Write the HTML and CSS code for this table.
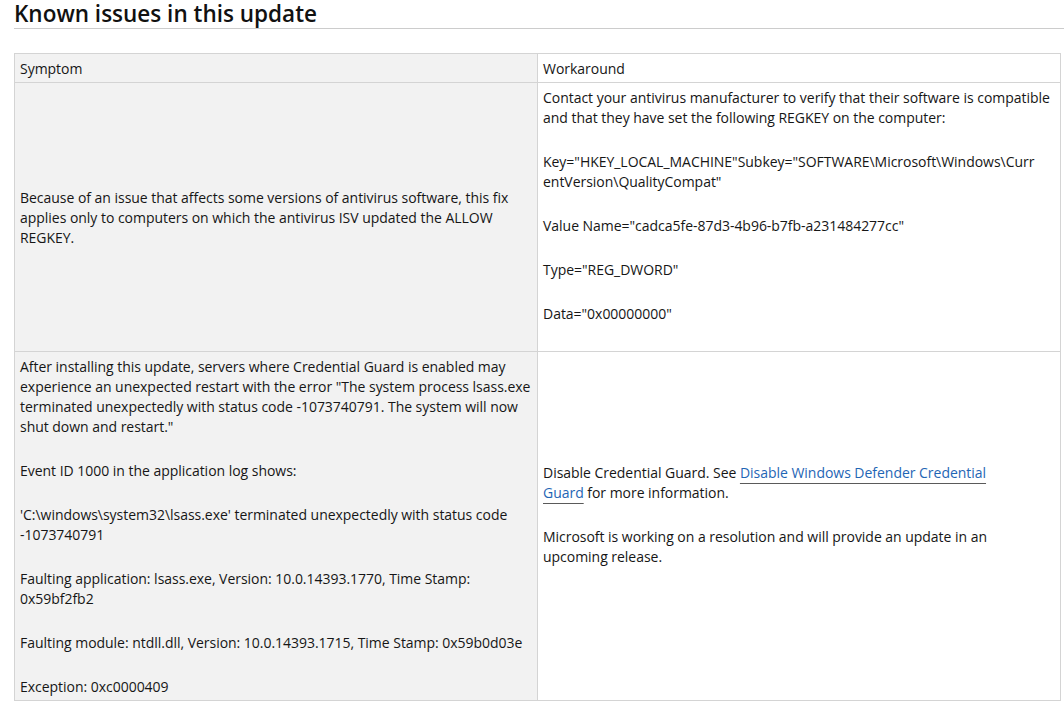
FILE: index.html
```html
<!DOCTYPE html>
<html lang="en">
<head>
<meta charset="utf-8">
<title>Known issues in this update</title>
<link rel="stylesheet" href="styles.css">
</head>
<body>
<main class="page">
  <h2 class="title">Known issues in this update</h2>
  <table class="issues">
    <colgroup>
      <col class="col-symptom">
      <col class="col-workaround">
    </colgroup>
    <thead>
      <tr>
        <th class="cell symptom">Symptom</th>
        <th class="cell workaround">Workaround</th>
      </tr>
    </thead>
    <tbody>
      <tr>
        <td class="cell symptom">
          <p>Because of an issue that affects some versions of antivirus software, this fix applies only to computers on which the antivirus ISV updated the ALLOW REGKEY.</p>
        </td>
        <td class="cell workaround keep-last">
          <p>Contact your antivirus manufacturer to verify that their software is compatible and that they have set the following REGKEY on the computer:</p>
          <p class="reg">Key="HKEY_LOCAL_MACHINE"Subkey="SOFTWARE\Microsoft\Windows\Curr<wbr>entVersion\QualityCompat"</p>
          <p>Value Name="cadca5fe-87d3-4b96-b7fb-a231484277cc"</p>
          <p>Type="REG_DWORD"</p>
          <p>Data="0x00000000"</p>
        </td>
      </tr>
      <tr>
        <td class="cell symptom">
          <p>After installing this update, servers where Credential Guard is enabled may experience an unexpected restart with the error "The system process lsass.exe terminated unexpectedly with status code -1073740791. The system will now shut down and restart."</p>
          <p>Event ID 1000 in the application log shows:</p>
          <p>'C:\windows\system32\lsass.exe' terminated unexpectedly with status code -1073740791</p>
          <p>Faulting application: lsass.exe, Version: 10.0.14393.1770, Time Stamp: 0x59bf2fb2</p>
          <p>Faulting module: ntdll.dll, Version: 10.0.14393.1715, Time Stamp: 0x59b0d03e</p>
          <p>Exception: 0xc0000409</p>
        </td>
        <td class="cell workaround keep-last">
          <p>Disable Credential Guard. See <a class="link" href="#">Disable Windows Defender Credential Guard</a>&nbsp;for&nbsp;more information.</p>
          <p>Microsoft is working on a resolution and will provide an update in an upcoming release.</p>
        </td>
      </tr>
    </tbody>
  </table>
</main>
</body>
</html>
```
FILE: styles.css
```css
html, body {
  margin: 0;
  padding: 0;
  background: #ffffff;
}

body {
  font-family: "Open Sans", "Noto Sans", "Liberation Sans", sans-serif;
  color: #161616;
  font-size: 14px;
  letter-spacing: -0.03px;
  line-height: 20px;
}

.page {
  padding-left: 14px;
}

.title {
  margin: 0;
  font-size: 22.5px;
  font-weight: 600;
  letter-spacing: 0;
  line-height: 28px;
  height: 28px;
  color: #111;
  border-bottom: 1px solid #cccccc;
}

.issues {
  margin-top: 24px;
  width: 1047px;
  border-collapse: collapse;
  table-layout: fixed;
}

.col-symptom {
  width: 523px;
}

.cell {
  border: 1px solid #d4d4d4;
  padding: 5px 5px 3px 5px;
  vertical-align: middle;
  text-align: left;
  font-weight: 400;
  overflow-wrap: break-word;
}

.symptom {
  background: #f2f2f2;
}

.workaround {
  background: #ffffff;
}

.cell p {
  margin: 0 0 24px 0;
}

.cell p:last-child {
  margin-bottom: 0;
}

.keep-last p:last-child {
  margin-bottom: 24px;
}

.link {
  color: #1f66b5;
  text-decoration: underline;
  text-decoration-color: #5a5a5a;
  text-underline-offset: 5px;
}
```
